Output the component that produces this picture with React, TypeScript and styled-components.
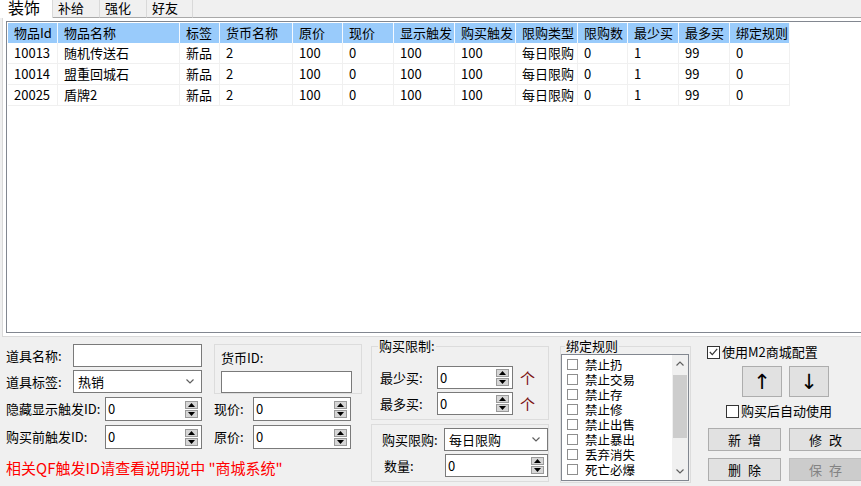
import React from 'react';
import styled, { createGlobalStyle } from 'styled-components';

const GlobalStyle = createGlobalStyle`
  html, body {
    margin: 0;
    padding: 0;
    background: #f0f0f0;
  }
  body {
    font-family: "Noto Sans CJK SC", "Liberation Sans", sans-serif;
    font-size: 13px;
    color: #000;
  }
`;

const Window = styled.div`
  width: 861px;
  height: 486px;
  overflow: hidden;
  display: flex;
  flex-direction: column;
  background: #f0f0f0;
`;

/* ---------- tabs ---------- */

const TabStrip = styled.div`
  display: flex;
  height: 18px;
`;

const Tab = styled.div<{ $w: number; $active?: boolean }>`
  box-sizing: border-box;
  width: ${p => p.$w}px;
  height: 18px;
  padding-left: ${p => (p.$active ? 8 : 5)}px;
  background: ${p => (p.$active ? '#fff' : '#f0f0f0')};
  border-right: 1px solid #d9d9d9;
  border-bottom: ${p => (p.$active ? 'none' : '1px solid #a9a9a9')};
  font-size: ${p => (p.$active ? 16 : 13)}px;
  line-height: ${p => (p.$active ? 14 : 16)}px;
  overflow: hidden;
  white-space: nowrap;
`;

const TabFill = styled.div`
  flex: 1;
  border-bottom: 1px solid #a9a9a9;
`;

const Panel = styled.div`
  margin-left: 2px;
  width: 880px;
  height: 319px;
  box-sizing: border-box;
  padding: 3px 0 3px 3px;
  background: #fff;
  border-left: 1px solid #d9d9d9;
  border-bottom: 1px solid #d9d9d9;
`;

/* ---------- list view ---------- */

const ListView = styled.div`
  box-sizing: border-box;
  height: 312px;
  width: 870px;
  border: 1px solid #828790;
  padding: 1px;
  background: #fff;
`;

const cols = [50, 122, 40, 73, 50, 51, 61, 61, 62, 50, 51, 51, 60];

const Grid = styled.div`
  display: grid;
  grid-template-columns: ${cols.map(c => `${c}px`).join(' ')};
  width: max-content;
`;

const HeadCell = styled.div`
  box-sizing: border-box;
  height: 20px;
  line-height: 20px;
  padding-left: 6px;
  background: #99cbfb;
  border-right: 1px solid #f4f9ff;
  white-space: nowrap;
  overflow: hidden;
`;

const Cell = styled.div`
  box-sizing: border-box;
  height: 21px;
  line-height: 20px;
  padding-left: 6px;
  border-right: 1px solid #f0f0f0;
  border-bottom: 1px solid #f0f0f0;
  white-space: nowrap;
  overflow: hidden;
`;

const headers = ['物品Id', '物品名称', '标签', '货币名称', '原价', '现价', '显示触发', '购买触发', '限购类型', '限购数', '最少买', '最多买', '绑定规则'];

const rows = [
  ['10013', '随机传送石', '新品', '2', '100', '0', '100', '100', '每日限购', '0', '1', '99', '0'],
  ['10014', '盟重回城石', '新品', '2', '100', '0', '100', '100', '每日限购', '0', '1', '99', '0'],
  ['20025', '盾牌2', '新品', '2', '100', '0', '100', '100', '每日限购', '0', '1', '99', '0'],
];

/* ---------- bottom form ---------- */

const Bottom = styled.div`
  display: flex;
  align-items: flex-start;
  padding-left: 6px;
  height: 149px;
`;

const LeftBlock = styled.div`
  width: 356px;
  display: flex;
  flex-direction: column;
  padding-top: 7px;
`;

const TopRow = styled.div`
  display: flex;
  align-items: flex-start;
`;

const Stack = styled.div<{ $gap: number }>`
  display: flex;
  flex-direction: column;
  gap: ${p => p.$gap}px;
`;

const FieldRow = styled.div<{ $mt?: number }>`
  display: flex;
  align-items: center;
  margin-top: ${p => p.$mt ?? 0}px;
`;

const Label = styled.span<{ $w: number; $ml?: number; $pl?: number }>`
  box-sizing: border-box;
  width: ${p => p.$w}px;
  margin-left: ${p => p.$ml ?? 0}px;
  padding-left: ${p => p.$pl ?? 0}px;
  flex-shrink: 0;
  white-space: nowrap;
  line-height: 16px;
`;

const TextBox = styled.div<{ $w: number; $h?: number }>`
  box-sizing: border-box;
  width: ${p => p.$w}px;
  height: ${p => p.$h ?? 23}px;
  background: #fff;
  border: 1px solid #7a7a7a;
`;

const SelectBox = styled.div<{ $w: number }>`
  box-sizing: border-box;
  width: ${p => p.$w}px;
  height: 23px;
  background: #fff;
  border: 1px solid #7a7a7a;
  display: flex;
  align-items: center;
  justify-content: space-between;
  padding: 0 7px 0 4px;
  line-height: 16px;
`;

const SpinBox = styled.div<{ $w: number; $h: number }>`
  box-sizing: border-box;
  width: ${p => p.$w}px;
  height: ${p => p.$h}px;
  background: #fff;
  border: 1px solid #7a7a7a;
  display: flex;
  align-items: center;
  justify-content: space-between;
  padding: 0 3px 0 2px;
  line-height: 16px;
`;

const SpinButtons = styled.div`
  display: flex;
  flex-direction: column;
  gap: 1px;
`;

const SpinBtn = styled.div`
  box-sizing: border-box;
  width: 13px;
  height: 8px;
  background: #d6d6d6;
  border: 1px solid #9a9a9a;
  display: flex;
  align-items: center;
  justify-content: center;
`;

const CurrencyGroup = styled.div`
  box-sizing: border-box;
  width: 148px;
  height: 50px;
  margin-left: 12px;
  border: 1px solid #dcdcdc;
  padding: 5px 0 0 6px;
  display: flex;
  flex-direction: column;
  gap: 5px;
`;

const Group = styled.fieldset<{ $w: number; $pad: string; $mt?: number }>`
  box-sizing: border-box;
  width: ${p => p.$w}px;
  margin: ${p => p.$mt ?? 0}px 0 0 0;
  padding: ${p => p.$pad};
  border: 1px solid #dcdcdc;
  min-width: 0;
`;

const Legend = styled.legend<{ $ml: number }>`
  padding: 0 1px;
  margin-left: ${p => p.$ml}px;
  line-height: 14px;
  font-size: 13px;
`;

const RedNote = styled.div`
  margin-top: 9px;
  color: #ff0000;
  font-size: 15px;
  line-height: 20px;
  white-space: nowrap;
`;

const Unit = styled.span`
  margin-left: 7px;
  color: #7a1010;
  font-size: 15px;
  line-height: 16px;
`;

const Col3 = styled.div`
  margin-left: 9px;
  padding-top: 2px;
  display: flex;
  flex-direction: column;
`;

const Col4 = styled.div`
  margin-left: 11px;
  padding-top: 2px;
`;

const ListBox = styled.div`
  box-sizing: border-box;
  width: 128px;
  height: 127px;
  background: #fff;
  border: 1px solid #828790;
  display: flex;
`;

const ListItems = styled.div`
  flex: 1;
  padding: 2px 0 0 5px;
  display: flex;
  flex-direction: column;
`;

const ListItem = styled.div`
  display: flex;
  align-items: center;
  height: 15px;
  line-height: 15px;
  font-size: 12.5px;
  white-space: nowrap;
`;

const SmallBox = styled.span`
  box-sizing: border-box;
  width: 11px;
  height: 11px;
  border: 1px solid #8e8e8e;
  margin-right: 7px;
  background: #fff;
`;

const ScrollBar = styled.div`
  width: 16px;
  background: #f0f0f0;
  display: flex;
  flex-direction: column;
  align-items: center;
`;

const ScrollArrow = styled.div`
  height: 17px;
  display: flex;
  align-items: center;
  justify-content: center;
`;

const ScrollThumb = styled.div`
  width: 14px;
  height: 63px;
  margin-top: 3px;
  background: #cdcdcd;
`;

const ScrollTrack = styled.div`
  flex: 1;
`;

const Col5 = styled.div`
  margin-left: 16px;
  padding-top: 7px;
  display: flex;
  flex-direction: column;
`;

const CheckRow = styled.label<{ $ml?: number; $mt?: number }>`
  display: flex;
  align-items: center;
  margin-left: ${p => p.$ml ?? 0}px;
  margin-top: ${p => p.$mt ?? 0}px;
  line-height: 16px;
  white-space: nowrap;
`;

const CheckBox = styled.span`
  box-sizing: border-box;
  width: 13px;
  height: 13px;
  border: 1px solid #333;
  background: #fff;
  margin-right: 2px;
  display: flex;
  align-items: center;
  justify-content: center;
`;

const ArrowRow = styled.div`
  display: flex;
  gap: 7px;
  margin: 6px 0 0 35px;
`;

const ArrowButton = styled.div`
  box-sizing: border-box;
  width: 40px;
  height: 31px;
  background: #e1e1e1;
  border: 1px solid #adadad;
  display: flex;
  align-items: center;
  justify-content: center;
  font-family: "DejaVu Sans", sans-serif;
  font-size: 21px;
`;

const ButtonRow = styled.div<{ $mt: number }>`
  display: flex;
  gap: 8px;
  margin: ${p => p.$mt}px 0 0 1px;
`;

const Button = styled.div<{ $disabled?: boolean }>`
  box-sizing: border-box;
  width: 73px;
  height: 23px;
  background: ${p => (p.$disabled ? '#cccccc' : '#e1e1e1')};
  border: 1px solid ${p => (p.$disabled ? '#bfbfbf' : '#adadad')};
  color: ${p => (p.$disabled ? '#838383' : '#000')};
  display: flex;
  align-items: center;
  justify-content: center;
  line-height: 16px;
  white-space: pre;
  word-spacing: 4px;
`;

const UpTri = () => (
  <svg width="7" height="4" viewBox="0 0 7 4">
    <path d="M0 4 L3.5 0 L7 4 Z" fill="#000" />
  </svg>
);

const DownTri = () => (
  <svg width="7" height="4" viewBox="0 0 7 4">
    <path d="M0 0 L3.5 4 L7 0 Z" fill="#000" />
  </svg>
);

const Chevron = ({ up, color = '#606060' }: { up?: boolean; color?: string }) => (
  <svg width="8" height="5" viewBox="0 0 8 5">
    <polyline
      points={up ? '0.5,4.5 4,1 7.5,4.5' : '0.5,0.5 4,4 7.5,0.5'}
      fill="none"
      stroke={color}
      strokeWidth="1.2"
    />
  </svg>
);

const Spin = ({ w, h, value }: { w: number; h: number; value: string }) => (
  <SpinBox $w={w} $h={h}>
    <span>{value}</span>
    <SpinButtons>
      <SpinBtn><UpTri /></SpinBtn>
      <SpinBtn><DownTri /></SpinBtn>
    </SpinButtons>
  </SpinBox>
);

const Check = ({ checked }: { checked?: boolean }) => (
  <CheckBox>
    {checked && (
      <svg width="9" height="8" viewBox="0 0 9 8">
        <polyline points="0.8,4 3.3,6.6 8.2,0.8" fill="none" stroke="#333" strokeWidth="1.2" />
      </svg>
    )}
  </CheckBox>
);

const bindRules = ['禁止扔', '禁止交易', '禁止存', '禁止修', '禁止出售', '禁止暴出', '丢弃消失', '死亡必爆'];

export default function App() {
  return (
    <Window>
      <GlobalStyle />
      <TabStrip>
        <Tab $w={53} $active>装饰</Tab>
        <Tab $w={47}>补给</Tab>
        <Tab $w={47}>强化</Tab>
        <Tab $w={46}>好友</Tab>
        <TabFill />
      </TabStrip>
      <Panel>
        <ListView>
          <Grid>
            {headers.map(h => (
              <HeadCell key={h}>{h}</HeadCell>
            ))}
            {rows.map((r, i) =>
              r.map((c, j) => <Cell key={`${i}-${j}`}>{c}</Cell>)
            )}
          </Grid>
        </ListView>
      </Panel>

      <Bottom>
        <LeftBlock>
          <TopRow>
            <Stack $gap={3}>
              <FieldRow>
                <Label $w={67}>道具名称:</Label>
                <TextBox $w={129} />
              </FieldRow>
              <FieldRow>
                <Label $w={67}>道具标签:</Label>
                <SelectBox $w={129}>
                  <span>热销</span>
                  <Chevron />
                </SelectBox>
              </FieldRow>
            </Stack>
            <CurrencyGroup>
              <Label $w={120}>货币ID:</Label>
              <TextBox $w={131} />
            </CurrencyGroup>
          </TopRow>
          <FieldRow $mt={3}>
            <Label $w={99}>隐藏显示触发ID:</Label>
            <Spin w={97} h={24} value="0" />
            <Label $w={39} $ml={12}>现价:</Label>
            <Spin w={98} h={24} value="0" />
          </FieldRow>
          <FieldRow $mt={4}>
            <Label $w={99}>购买前触发ID:</Label>
            <Spin w={97} h={24} value="0" />
            <Label $w={39} $ml={12}>原价:</Label>
            <Spin w={98} h={24} value="0" />
          </FieldRow>
          <RedNote>相关QF触发ID请查看说明说中 "商城系统"</RedNote>
        </LeftBlock>

        <Col3>
          <Group $w={178} $pad="13px 0 4px 8px">
            <Legend $ml={-2}>购买限制:</Legend>
            <Stack $gap={3}>
              <FieldRow>
                <Label $w={57}>最少买:</Label>
                <Spin w={76} h={23} value="0" />
                <Unit>个</Unit>
              </FieldRow>
              <FieldRow>
                <Label $w={57}>最多买:</Label>
                <Spin w={76} h={23} value="0" />
                <Unit>个</Unit>
              </FieldRow>
            </Stack>
          </Group>
          <Group $w={178} $pad="3px 0 4px 10px" $mt={4}>
            <Stack $gap={3}>
              <FieldRow>
                <Label $w={62}>购买限购:</Label>
                <SelectBox $w={105}>
                  <span>每日限购</span>
                  <Chevron />
                </SelectBox>
              </FieldRow>
              <FieldRow>
                <Label $w={63} $pl={2}>数量:</Label>
                <Spin w={103} h={23} value="0" />
              </FieldRow>
            </Stack>
          </Group>
        </Col3>

        <Col4>
          <Group $w={131} $pad="1px 1px 1px 0">
            <Legend $ml={4}>绑定规则</Legend>
            <ListBox>
              <ListItems>
                {bindRules.map(r => (
                  <ListItem key={r}>
                    <SmallBox />
                    {r}
                  </ListItem>
                ))}
              </ListItems>
              <ScrollBar>
                <ScrollArrow><Chevron up /></ScrollArrow>
                <ScrollThumb />
                <ScrollTrack />
                <ScrollArrow><Chevron /></ScrollArrow>
              </ScrollBar>
            </ListBox>
          </Group>
        </Col4>

        <Col5>
          <CheckRow>
            <Check checked />
            使用M2商城配置
          </CheckRow>
          <ArrowRow>
            <ArrowButton>↑</ArrowButton>
            <ArrowButton>↓</ArrowButton>
          </ArrowRow>
          <CheckRow $ml={19} $mt={6}>
            <Check />
            购买后自动使用
          </CheckRow>
          <ButtonRow $mt={9}>
            <Button>新 增</Button>
            <Button>修 改</Button>
          </ButtonRow>
          <ButtonRow $mt={7}>
            <Button>删 除</Button>
            <Button $disabled>保 存</Button>
          </ButtonRow>
        </Col5>
      </Bottom>
    </Window>
  );
}
